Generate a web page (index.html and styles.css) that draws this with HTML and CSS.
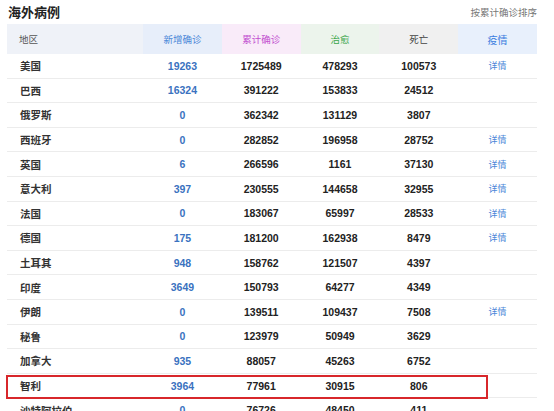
FILE: index.html
```html
<!DOCTYPE html>
<html lang="zh">
<head>
<meta charset="utf-8">
<link rel="stylesheet" href="styles.css">
</head>
<body>
<div class="wrap">
  <div class="top">
    <h1 class="title">海外病例</h1>
    <span class="sort">按累计确诊排序</span>
  </div>
  <div class="table">
    <div class="row head">
      <div class="c c-area">地区</div>
      <div class="c c-new">新增确诊</div>
      <div class="c c-total">累计确诊</div>
      <div class="c c-cure">治愈</div>
      <div class="c c-dead">死亡</div>
      <div class="c c-info">疫情</div>
    </div>
    <div class="row"><div class="c name">美国</div><div class="c num blue">19263</div><div class="c num">1725489</div><div class="c num">478293</div><div class="c num">100573</div><div class="c link">详情</div></div>
    <div class="row"><div class="c name">巴西</div><div class="c num blue">16324</div><div class="c num">391222</div><div class="c num">153833</div><div class="c num">24512</div><div class="c link"></div></div>
    <div class="row"><div class="c name">俄罗斯</div><div class="c num blue">0</div><div class="c num">362342</div><div class="c num">131129</div><div class="c num">3807</div><div class="c link"></div></div>
    <div class="row"><div class="c name">西班牙</div><div class="c num blue">0</div><div class="c num">282852</div><div class="c num">196958</div><div class="c num">28752</div><div class="c link">详情</div></div>
    <div class="row"><div class="c name">英国</div><div class="c num blue">6</div><div class="c num">266596</div><div class="c num">1161</div><div class="c num">37130</div><div class="c link">详情</div></div>
    <div class="row"><div class="c name">意大利</div><div class="c num blue">397</div><div class="c num">230555</div><div class="c num">144658</div><div class="c num">32955</div><div class="c link">详情</div></div>
    <div class="row"><div class="c name">法国</div><div class="c num blue">0</div><div class="c num">183067</div><div class="c num">65997</div><div class="c num">28533</div><div class="c link">详情</div></div>
    <div class="row"><div class="c name">德国</div><div class="c num blue">175</div><div class="c num">181200</div><div class="c num">162938</div><div class="c num">8479</div><div class="c link">详情</div></div>
    <div class="row"><div class="c name">土耳其</div><div class="c num blue">948</div><div class="c num">158762</div><div class="c num">121507</div><div class="c num">4397</div><div class="c link"></div></div>
    <div class="row"><div class="c name">印度</div><div class="c num blue">3649</div><div class="c num">150793</div><div class="c num">64277</div><div class="c num">4349</div><div class="c link"></div></div>
    <div class="row"><div class="c name">伊朗</div><div class="c num blue">0</div><div class="c num">139511</div><div class="c num">109437</div><div class="c num">7508</div><div class="c link">详情</div></div>
    <div class="row"><div class="c name">秘鲁</div><div class="c num blue">0</div><div class="c num">123979</div><div class="c num">50949</div><div class="c num">3629</div><div class="c link"></div></div>
    <div class="row"><div class="c name">加拿大</div><div class="c num blue">935</div><div class="c num">88057</div><div class="c num">45263</div><div class="c num">6752</div><div class="c link"></div></div>
    <div class="row hl"><div class="c name">智利</div><div class="c num blue">3964</div><div class="c num">77961</div><div class="c num">30915</div><div class="c num">806</div><div class="c link"></div><div class="mark"></div></div>
    <div class="row"><div class="c name">沙特阿拉伯</div><div class="c num blue">0</div><div class="c num">76726</div><div class="c num">48450</div><div class="c num">411</div><div class="c link"></div></div>
  </div>
</div>
</body>
</html>
```
FILE: styles.css
```css
html, body {
  margin: 0;
  padding: 0;
  background: #fff;
  overflow: hidden;
}
body {
  font-family: "Noto Sans CJK SC", "Liberation Sans", sans-serif;
  color: #222;
}
.wrap {
  padding: 0 17px 0 7px;
}
.top {
  display: flex;
  justify-content: space-between;
  align-items: center;
  height: 24px;
}
.title {
  margin: 0 0 0 1px;
  font-size: 13px;
  font-weight: bold;
  color: #222;
  line-height: 18px;
}
.sort {
  font-size: 9.5px;
  color: #777;
}
.table {
  display: flex;
  flex-direction: column;
}
.row {
  display: grid;
  grid-template-columns: 136px repeat(5, 1fr);
  height: 24.6px;
  border-bottom: 1px solid #ececec;
  box-sizing: border-box;
  align-items: center;
  position: relative;
}
.row.head {
  height: 30px;
  border-bottom: none;
  align-items: stretch;
}
.head .c {
  display: flex;
  align-items: center;
  justify-content: center;
  font-size: 9.5px;
}
.head .c-area { justify-content: flex-start; padding-left: 12px; background: #eff2f8; color: #555; }
.head .c-new { background: #e7eefa; color: #4a86d8; }
.head .c-total { background: #f9ebf9; color: #c24fd0; }
.head .c-cure { background: #ecf4ec; color: #3aa64a; }
.head .c-dead { background: #f0f0f0; color: #444; }
.head .c-info { background: #e8f0fc; color: #3b7de0; font-size: 10px; }
.name {
  padding-left: 13px;
  font-size: 10.5px;
  font-weight: bold;
  color: #333;
}
.num {
  text-align: center;
  font-family: "Liberation Sans", sans-serif;
  font-size: 10.5px;
  font-weight: bold;
  color: #222;
}
.num.blue { color: #3a72c0; }
.link {
  text-align: center;
  font-size: 9px;
  color: #4a86d8;
}
.mark {
  position: absolute;
  left: -1px;
  top: 1px;
  width: 482px;
  height: 24px;
  border: 2px solid #d8272b;
  box-sizing: border-box;
}
```
